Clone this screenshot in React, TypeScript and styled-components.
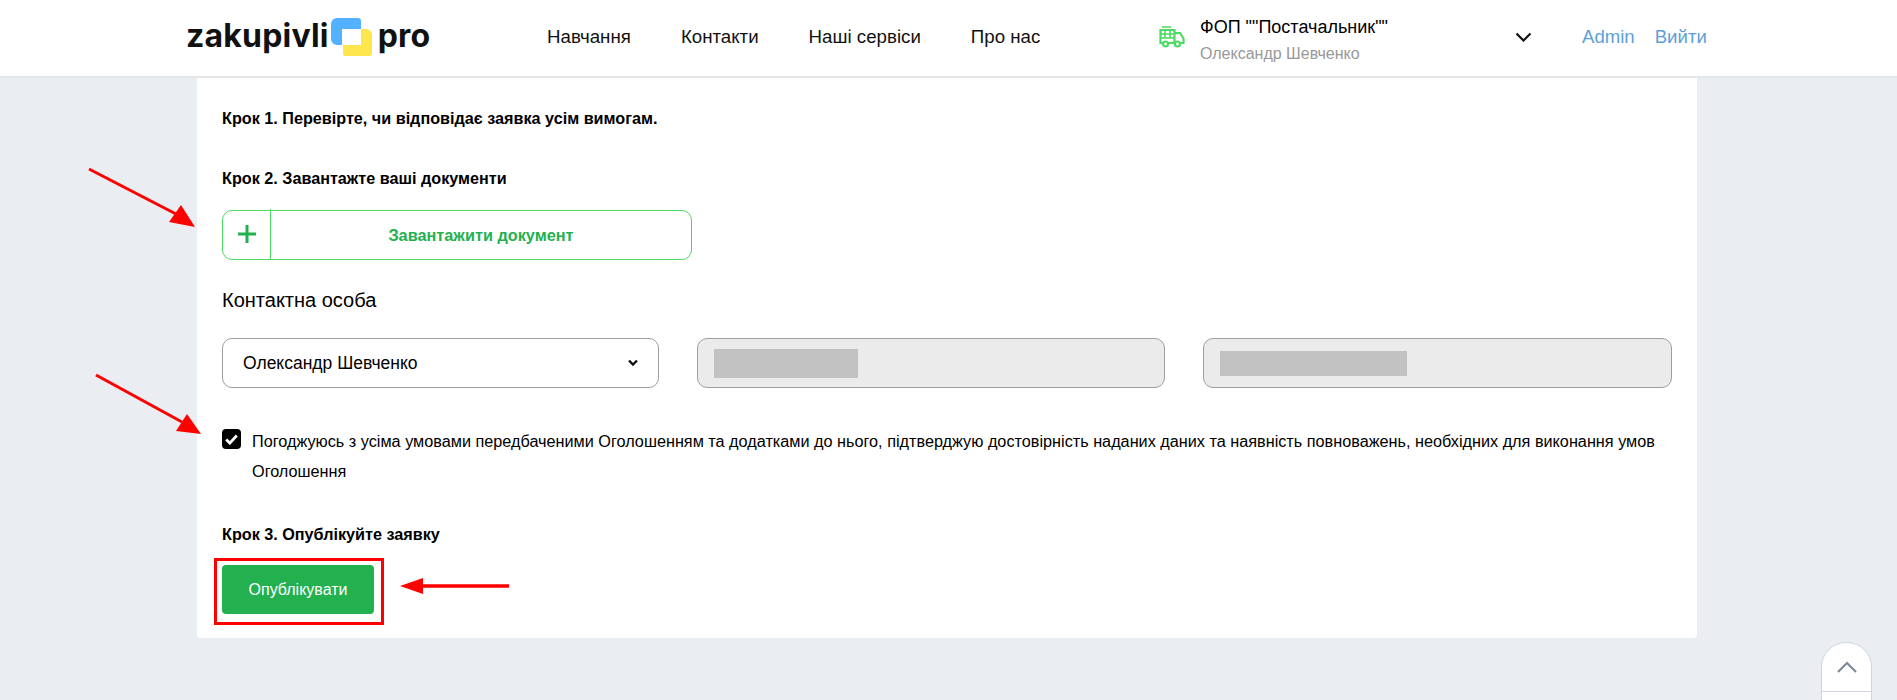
import React from "react";
import styled, { createGlobalStyle } from "styled-components";

const Global = createGlobalStyle`
  html, body { margin: 0; padding: 0; height: 700px; overflow: hidden; background: #eaedf2; }
  body { font-family: "Liberation Sans", Arial, sans-serif; color: #000; }
  * { box-sizing: border-box; }
`;

const Page = styled.div`
  position: relative;
  width: 100%;
  height: 700px;
  overflow: hidden;
  background: #eaedf2;
`;

const Header = styled.header`
  height: 78px;
  background: #fff;
  border-bottom: 2px solid #e5e6e8;
  display: flex;
  align-items: center;
  padding: 0 0 3px 186px;
`;

const Logo = styled.div`
  width: 243px;
  display: flex;
  align-items: center;
  font-family: Inter, sans-serif;
  font-weight: 700;
  font-size: 32px;
  letter-spacing: 0.2px;
  color: #111;
  line-height: 1;
`;

const LogoWord = styled.span`
  margin-top: -2px;
`;

const LogoMark = styled.svg`
  flex: none;
  width: 41px;
  height: 38px;
  margin: 0 6px 0 2px;
`;

const Nav = styled.nav`
  display: flex;
  gap: 50px;
  margin-left: 118px;
  width: 612px;
`;

const NavLink = styled.a`
  font-size: 18.7px;
  color: #111;
`;

const Org = styled.div`
  display: flex;
  align-items: center;
  width: 423px;
`;

const OrgText = styled.div`
  margin-left: 15px;
  flex: 1;
  display: flex;
  flex-direction: column;
  gap: 8px;
  padding-top: 5px;
`;

const OrgName = styled.div`
  font-size: 18px;
  line-height: 20px;
  color: #000;
`;

const OrgPerson = styled.div`
  font-size: 16px;
  line-height: 17px;
  color: #999;
`;

const Chevron = styled.svg`
  flex: none;
  width: 17px;
  height: 10px;
  margin-right: 50px;
`;

const AuthLink = styled.a`
  font-size: 18.6px;
  color: #5c9fd8;
  margin-right: 20px;
`;

const Panel = styled.main`
  width: 1500px;
  height: 560px;
  margin-left: 197px;
  background: #fff;
  border-radius: 0 0 4px 4px;
  padding: 32px 25px 0;
`;

const Step = styled.div<{ $after: number }>`
  font-size: 16.2px;
  font-weight: 700;
  line-height: 17px;
  margin-bottom: ${(p) => p.$after}px;
`;

const Upload = styled.div`
  position: relative;
  width: 470px;
  height: 50px;
  border: 1px solid #4cd964;
  border-radius: 10px;
  display: flex;
  align-items: stretch;
`;

const UploadPlus = styled.div`
  width: 48px;
  border-right: 1px solid #4cd964;
  margin-top: -2px;
  display: flex;
  align-items: center;
  justify-content: center;
`;

const UploadLabel = styled.div`
  flex: 1;
  display: flex;
  align-items: center;
  justify-content: center;
  font-size: 16.3px;
  font-weight: 700;
  color: #23b14f;
`;

const SectionTitle = styled.div`
  margin-top: 28px;
  font-size: 20px;
  line-height: 24px;
`;

const Fields = styled.div`
  margin-top: 26px;
  display: flex;
  gap: 38px;
`;

const Field = styled.div<{ $width: number; $disabled?: boolean }>`
  width: ${(p) => p.$width}px;
  height: 50px;
  border: 1px solid #9f9f9f;
  border-radius: 10px;
  background: ${(p) => (p.$disabled ? "#ebebeb" : "#fff")};
  display: flex;
  align-items: center;
  justify-content: space-between;
  padding: 0 20px;
  font-size: 17.5px;
`;

const Redaction = styled.div<{ $width: number; $height: number; $left: number }>`
  width: ${(p) => p.$width}px;
  height: ${(p) => p.$height}px;
  margin-left: ${(p) => p.$left}px;
  background: #c2c2c2;
`;

const Agree = styled.div`
  margin: 40px 0 39px;
  display: flex;
  align-items: flex-start;
`;

const Check = styled.div`
  flex: none;
  width: 19px;
  height: 20px;
  margin-top: 1px;
  background: #000;
  border-radius: 4px;
  display: flex;
  align-items: center;
  justify-content: center;
`;

const AgreeText = styled.div`
  font-size: 16.24px;
  line-height: 30px;
  margin: -2px 0 1px 11px;
`;

const Publish = styled.button`
  display: block;
  width: 152px;
  height: 49px;
  border: 0;
  border-radius: 4px;
  background: #23b14f;
  color: #fff;
  font: 400 16px "Liberation Sans", Arial, sans-serif;
`;

const Annotations = styled.svg`
  position: absolute;
  inset: 0;
  width: 100%;
  height: 100%;
  pointer-events: none;
`;

const ScrollTop = styled.div`
  position: absolute;
  left: 1821px;
  top: 642px;
  width: 51px;
  height: 70px;
  background: #fff;
  border: 1px solid #cfd4de;
  border-radius: 25px 25px 0 0;
`;

const ScrollTopArrow = styled.div`
  height: 49px;
  border-bottom: 1px solid #cfd4de;
  display: flex;
  align-items: center;
  justify-content: center;
`;

export default function App() {
  return (
    <Page>
      <Global />
      <Header>
        <Logo>
          <LogoWord>zakupivli</LogoWord>
          <LogoMark viewBox="0 0 41 38">
            <path d="M6 0h21a3 3 0 0 1 3 3v8H11v16H6a6 6 0 0 1-6-6V6a6 6 0 0 1 6-6z" fill="#52b2ff" />
            <path d="M30 11h5a6 6 0 0 1 6 6v18a3 3 0 0 1-3 3H15a3 3 0 0 1-3-3v-8h18z" fill="#fde64e" />
          </LogoMark>
          <LogoWord>pro</LogoWord>
        </Logo>
        <Nav>
          <NavLink>Навчання</NavLink>
          <NavLink>Контакти</NavLink>
          <NavLink>Наші сервіси</NavLink>
          <NavLink>Про нас</NavLink>
        </Nav>
        <Org>
          <svg width="26" height="22" viewBox="0 0 26 22" fill="none" stroke="#4cd964" strokeWidth="2.2">
            <path d="M4 17H1.5V4h14v13H9" />
            <path d="M3 1h9M1.5 8h14M1.5 12h14M6 4v8M11 4v8" strokeWidth="1.6" />
            <path d="M15.5 7H21l3.5 5.5V17h-3M15.5 17H13" />
            <circle cx="6.5" cy="18" r="2.5" />
            <circle cx="18.5" cy="18" r="2.5" />
          </svg>
          <OrgText>
            <OrgName>ФОП ""Постачальник""</OrgName>
            <OrgPerson>Олександр Шевченко</OrgPerson>
          </OrgText>
          <Chevron viewBox="0 0 17 10" fill="none" stroke="#111" strokeWidth="2.2">
            <path d="M1.5 1.5l7 7 7-7" />
          </Chevron>
        </Org>
        <AuthLink>Admin</AuthLink>
        <AuthLink>Вийти</AuthLink>
      </Header>
      <Panel>
        <Step $after={43}>Крок 1. Перевірте, чи відповідає заявка усім вимогам.</Step>
        <Step $after={23}>Крок 2. Завантажте ваші документи</Step>
        <Upload>
          <UploadPlus>
            <svg width="18" height="18" viewBox="0 0 18 18" stroke="#23b14f" strokeWidth="3">
              <path d="M9 0v18M0 9h18" />
            </svg>
          </UploadPlus>
          <UploadLabel>Завантажити документ</UploadLabel>
        </Upload>
        <SectionTitle>Контактна особа</SectionTitle>
        <Fields>
          <Field $width={437}>
            Олександр Шевченко
            <svg width="10" height="8" viewBox="0 0 10 8" fill="none" stroke="#111" strokeWidth="2.4">
              <path d="M1 1.5l4 4 4-4" />
            </svg>
          </Field>
          <Field $width={469} $disabled>
            <Redaction $width={144} $height={29} $left={-4} />
          </Field>
          <Field $width={469} $disabled>
            <Redaction $width={187} $height={25} $left={-4} />
          </Field>
        </Fields>
        <Agree>
          <Check>
            <svg width="13" height="11" viewBox="0 0 13 11" fill="none" stroke="#fff" strokeWidth="2.8">
              <path d="M1.2 5.5l3.6 3.6 7-7.6" />
            </svg>
          </Check>
          <AgreeText>
            Погоджуюсь з усіма умовами передбаченими Оголошенням та додатками до нього, підтверджую достовірність наданих даних та наявність повноважень, необхідних для виконання умов Оголошення
          </AgreeText>
        </Agree>
        <Step $after={22}>Крок 3. Опублікуйте заявку</Step>
        <Publish>Опублікувати</Publish>
      </Panel>
      <Annotations viewBox="0 0 1897 700">
        <g fill="#fe0000" stroke="none">
          <path d="M195 227L169 222L181 205Z" />
          <path d="M201 434L176 431L187 414Z" />
          <path d="M400 586L423 578V594Z" />
        </g>
        <g stroke="#fe0000" fill="none">
          <path d="M89 169L176 214" strokeWidth="3" />
          <path d="M96 375L182 422" strokeWidth="3" />
          <path d="M420 586H509" strokeWidth="3.5" />
          <rect x="215.5" y="559.5" width="167" height="64" strokeWidth="3" />
        </g>
      </Annotations>
      <ScrollTop>
        <ScrollTopArrow>
          <svg width="20" height="12" viewBox="0 0 20 12" fill="none" stroke="#7a8799" strokeWidth="2">
            <path d="M1 11l9-9 9 9" />
          </svg>
        </ScrollTopArrow>
      </ScrollTop>
    </Page>
  );
}
